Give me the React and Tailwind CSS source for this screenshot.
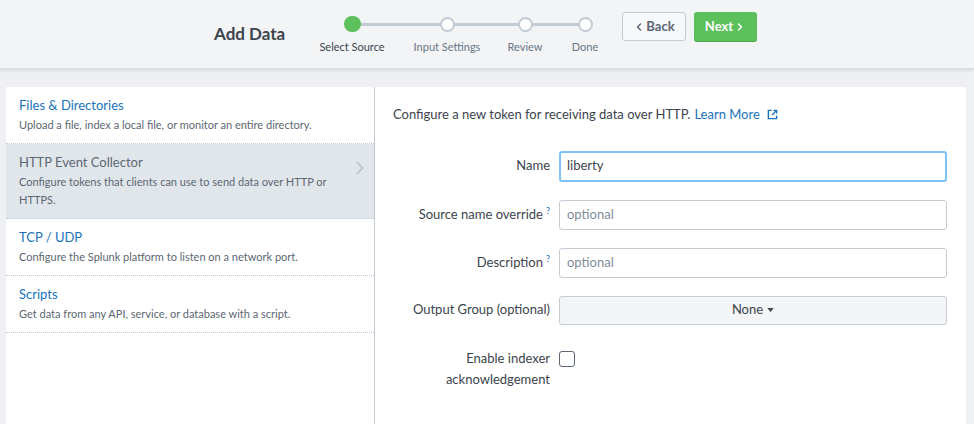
import { FiChevronRight, FiChevronLeft } from 'react-icons/fi';

const steps = [
  { label: 'Select Source', active: true, w: 'w-[80px]' },
  { label: 'Input Settings', w: 'w-[110px]' },
  { label: 'Review', w: 'w-[46px]' },
  { label: 'Done', w: 'w-[74px]' },
];

const sources = [
  { title: 'Files & Directories', desc: 'Upload a file, index a local file, or monitor an entire directory.' },
  { title: 'HTTP Event Collector', desc: 'Configure tokens that clients can use to send data over HTTP or HTTPS.', selected: true },
  { title: 'TCP / UDP', desc: 'Configure the Splunk platform to listen on a network port.' },
  { title: 'Scripts', desc: 'Get data from any API, service, or database with a script.' },
];

function Field({ label, help, children }) {
  return (
    <div className="flex items-center gap-[9px]">
      <div className="w-[157px] whitespace-nowrap text-right text-[13px] text-[#3c444d]">
        {label}
        {help && <sup className="ml-[3px] text-[9px] text-[#1a73b8]">?</sup>}
      </div>
      {children}
    </div>
  );
}

export default function App() {
  return (
    <div className="h-[424px] w-[974px] overflow-hidden bg-[#eef0f3] font-['Lato',sans-serif] text-[#3c444d]">
      {/* header */}
      <div className="relative flex h-[69px] items-start border-b border-[#d9dde3] bg-[#f2f4f6] shadow-[0_2px_3px_rgba(0,0,0,0.08)]">
        <div className="ml-[214px] mt-[21px] w-[98px] text-[17px] font-bold text-[#3c444d]">Add Data</div>
        <div className="relative mt-[15px] flex h-[40px] w-[310px]">
          <div className="absolute left-[40px] right-[37px] top-[8px] h-[3px] bg-[#c3cbd4]" />
          {steps.map((s) => (
            <div key={s.label} className={'relative flex flex-col items-center ' + s.w}>
              {s.active ? (
                <div className="mt-[1px] h-[17px] w-[17px] rounded-full bg-[#5cc05c]" />
              ) : (
                <div className="mt-[2px] h-[15px] w-[15px] rounded-full border-[2px] border-[#c3cbd4] bg-white" />
              )}
              <div className={'mt-[7px] whitespace-nowrap text-[11px] ' + (s.active ? 'text-[#3c444d]' : 'text-[#6b7785]')}>
                {s.label}
              </div>
            </div>
          ))}
        </div>
        <div className="mt-[12px] flex gap-[8px]">
          <button className="flex h-[29px] w-[64px] items-center justify-center rounded-[3px] border border-[#c3cbd4] bg-[#f7f8fa] text-[13px] font-bold text-[#5c6773]">
            <FiChevronLeft className="mr-[1px] h-[12px] w-[12px] stroke-[3]" />
            Back
          </button>
          <button className="flex h-[29px] w-[63px] items-center justify-center rounded-[3px] bg-[#5cc05c] text-[13px] font-bold text-white shadow-[0_1px_0_#4aa34a]">
            Next
            <FiChevronRight className="ml-[1px] h-[12px] w-[12px] stroke-[3]" />
          </button>
        </div>
      </div>

      {/* body */}
      <div className="ml-[6px] mr-[8px] mt-[18px] flex h-[340px] bg-white">
        <div className="w-[369px] border-r border-[#c3cbd4] bg-white">
          {sources.map((s) => (
            <div
              key={s.title}
              className={
                'relative border-b border-dotted border-[#c3cbd4] pb-[9px] pl-[13px] pr-[40px] pt-[9px] ' +
                (s.selected ? 'bg-[#e1e6eb]' : 'bg-white')
              }
            >
              <div className={'text-[13px] leading-[18px] ' + (s.selected ? 'text-[#5c6773]' : 'text-[#1a73b8]')}>{s.title}</div>
              <div className="mt-[2px] text-[11px] leading-[18px] text-[#5c6773]">{s.desc}</div>
              {s.selected && (
                <FiChevronRight className="absolute right-[3px] top-[13px] h-[22px] w-[22px] stroke-[1.5] text-[#b5bcc5]" />
              )}
            </div>
          ))}
        </div>
        <div className="flex-1 pl-[18px] pr-[19px] pt-[18px]">
          <div className="flex items-center text-[13px] text-[#3c444d]">
            Configure a new token for receiving data over HTTP.
            <span className="ml-[4px] text-[#1a73b8]">Learn More</span>
            <svg viewBox="0 0 12 12" className="ml-[7px] h-[11px] w-[11px] text-[#1a73b8]" fill="none" stroke="currentColor" strokeWidth="1.5">
              <path d="M5 1.5H1.5v9h9V7" />
              <path d="M7 1.5h3.5V5M10.5 1.5 5.5 6.5" />
            </svg>
          </div>
          <div className="mt-[26px] flex flex-col gap-[18px]">
            <Field label="Name">
              <div className="flex h-[31px] flex-1 items-center rounded-[3px] border-2 border-[#7ec3f5] px-[6px] text-[13px] text-[#3c444d]">
                liberty
              </div>
            </Field>
            <Field label="Source name override" help>
              <div className="flex h-[30px] flex-1 items-center rounded-[3px] border border-[#c3cbd4] px-[7px] text-[13px] text-[#818d99]">
                optional
              </div>
            </Field>
            <Field label="Description" help>
              <div className="flex h-[30px] flex-1 items-center rounded-[3px] border border-[#c3cbd4] px-[7px] text-[13px] text-[#818d99]">
                optional
              </div>
            </Field>
            <Field label="Output Group (optional)">
              <div className="flex h-[29px] flex-1 items-center justify-center rounded-[3px] border border-[#c3cbd4] bg-[#f3f5f7] text-[13px] text-[#3c444d]">
                None
                <svg viewBox="0 0 8 5" className="ml-[4px] h-[4px] w-[7px]" fill="#3c444d">
                  <path d="M0 0h8L4 5z" />
                </svg>
              </div>
            </Field>
            <div className="mt-[5px] flex items-start gap-[9px]">
              <div className="w-[157px] text-right text-[13px] leading-[21px] text-[#3c444d]">
                Enable indexer
                <br />
                acknowledgement
              </div>
              <div className="mt-[3px] h-[16px] w-[16px] rounded-[3px] border border-[#5c6773] bg-white" />
            </div>
          </div>
        </div>
      </div>
    </div>
  );
}
